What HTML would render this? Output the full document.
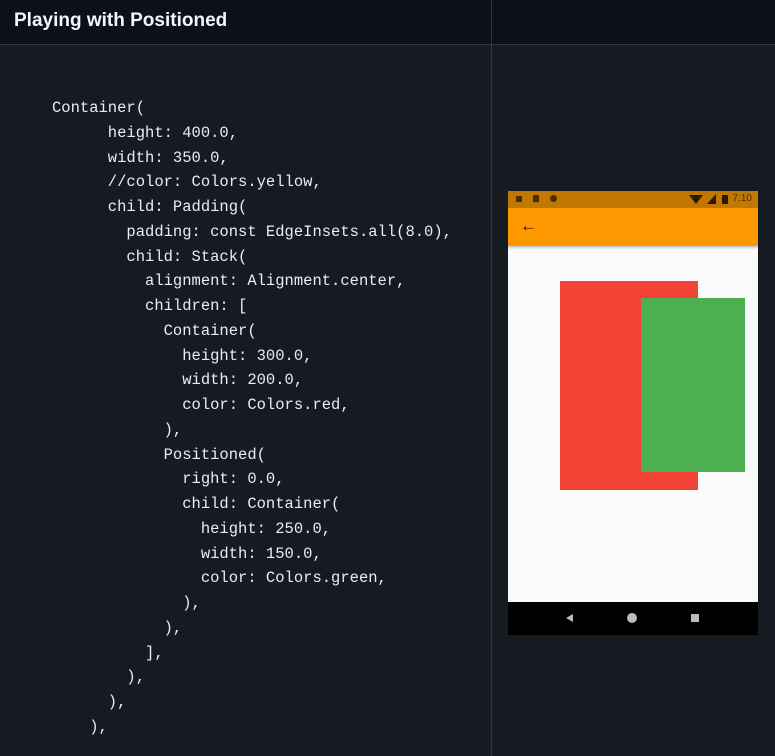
<!DOCTYPE html>
<html><head><style>
body{margin:0;width:775px;height:756px;background:#161b22;overflow:hidden;font-family:"Liberation Sans",sans-serif;position:relative}
.hdr{position:absolute;left:0;top:0;width:775px;height:44px;background:#0d1117;border-bottom:1px solid #30363d}
.hdr span{position:absolute;left:14px;top:10px;color:#f0f6fc;font-weight:bold;font-size:19px}
.vd{position:absolute;left:491px;top:0;width:1px;height:756px;background:#30363d}
pre{position:absolute;left:52px;top:96px;margin:0;font-family:"Liberation Mono",monospace;font-size:15.5px;line-height:24.75px;color:#e6edf3}
.ph{position:absolute;left:508px;top:191px;width:250px;height:444px;background:#fafafa}
</style></head><body>
<div class="hdr"><span>Playing with Positioned</span></div>
<div class="vd"></div>
<pre>Container(
      height: 400.0,
      width: 350.0,
      //color: Colors.yellow,
      child: Padding(
        padding: const EdgeInsets.all(8.0),
        child: Stack(
          alignment: Alignment.center,
          children: [
            Container(
              height: 300.0,
              width: 200.0,
              color: Colors.red,
            ),
            Positioned(
              right: 0.0,
              child: Container(
                height: 250.0,
                width: 150.0,
                color: Colors.green,
              ),
            ),
          ],
        ),
      ),
    ),</pre>
<div class="ph">
 <div style="position:absolute;left:0;top:0;width:250px;height:17px;background:#c17800"></div>
 <div style="position:absolute;left:8px;top:5px;width:6px;height:6px;background:#4a3000"></div>
 <div style="position:absolute;left:25px;top:4px;width:6px;height:7px;background:#4a3000"></div>
 <div style="position:absolute;left:42px;top:4px;width:7px;height:7px;border-radius:50%;background:#4a3000"></div>
 <div style="position:absolute;right:6px;top:2px;font-size:10px;color:#4a3000">7:10</div>
 <div style="position:absolute;right:30px;top:4px;width:6px;height:9px;background:#2a1a00"></div>
 <div style="position:absolute;right:42px;top:3px;width:0;height:0;border-left:9px solid transparent;border-bottom:10px solid #2a1a00"></div>
 <div style="position:absolute;right:55px;top:4px;width:0;height:0;border-left:7px solid transparent;border-right:7px solid transparent;border-top:9px solid #2a1a00"></div>
 <div style="position:absolute;left:0;top:17px;width:250px;height:38px;background:#ff9800;box-shadow:0 2px 2px rgba(0,0,0,.2)"></div>
 <div style="position:absolute;left:12px;top:25px;font-size:17px;font-weight:bold;color:#111">&#8592;</div>
 <div style="position:absolute;left:52px;top:90px;width:138px;height:209px;background:#f44336"></div>
 <div style="position:absolute;left:133px;top:107px;width:104px;height:174px;background:#4caf50"></div>
 <div style="position:absolute;left:0;top:411px;width:250px;height:33px;background:#000"></div>
 <div style="position:absolute;left:58px;top:423px;width:0;height:0;border-top:4px solid transparent;border-bottom:4px solid transparent;border-right:7px solid #bbb"></div>
 <div style="position:absolute;left:119px;top:422px;width:10px;height:10px;border-radius:50%;background:#bbb"></div>
 <div style="position:absolute;left:183px;top:423px;width:8px;height:8px;background:#bbb"></div>
</div>
</body></html>
